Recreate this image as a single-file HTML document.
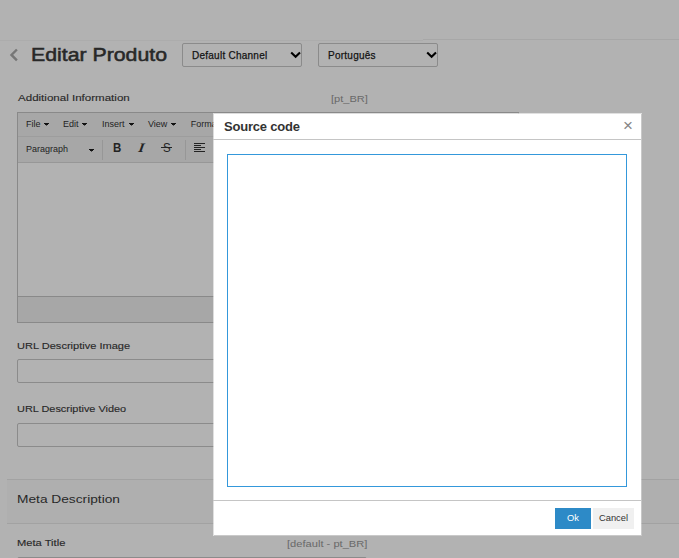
<!DOCTYPE html>
<html>
<head>
<meta charset="utf-8">
<title>Editar Produto</title>
<style>
html,body{margin:0;padding:0;}
body{width:679px;height:558px;overflow:hidden;background:#fff;position:relative;font-family:"Liberation Sans",sans-serif;color:#3a3a3a;}
.abs{position:absolute;}
.t{position:absolute;white-space:nowrap;line-height:1;}
/* page */
#navline1{left:0;top:40px;width:423px;height:1px;background:#f6f6f6;}
#navline2{left:423px;top:39px;width:256px;height:1px;background:#efefef;}
#title{left:30.6px;top:45px;font-size:19px;font-weight:normal;color:#3a3a3a;-webkit-text-stroke:0.55px #3a3a3a;transform:scaleX(1.12);transform-origin:0 0;}
.sel{position:absolute;top:43px;width:120px;height:24px;box-sizing:border-box;border:1px solid #c7c7c7;border-radius:2px;background:#fff;}
.sel span{position:absolute;left:9px;top:6.5px;font-size:10px;letter-spacing:0.25px;color:#1c1c1c;-webkit-text-stroke:0.25px #1c1c1c;white-space:nowrap;line-height:1;}
.sel svg{position:absolute;left:106.8px;top:7.2px;}
.lbl{font-size:9.9px;color:#3a3a3a;transform-origin:0 0;-webkit-text-stroke:0.13px #3a3a3a;}
.loc{font-size:9.9px;color:#979797;transform-origin:0 0;}
.inp{position:absolute;left:17px;width:350px;height:24px;box-sizing:border-box;border:1px solid #c7c7c7;border-radius:2px;background:#fff;}
/* editor */
#ed{left:17px;top:112px;width:502px;height:211px;box-sizing:border-box;border:1px solid #c5c5c5;background:#fff;}
#menubar{left:0;top:0;width:500px;height:23px;background:#f0f0f0;border-bottom:1px solid #e1e1e1;}
#toolbar{left:0;top:24px;width:500px;height:25px;background:#f0f0f0;border-bottom:1px solid #d9d9d9;}
#status{left:0;top:183px;width:500px;height:25px;background:#f0f0f0;border-top:1px solid #c5c5c5;}
.mi{font-size:9px;color:#333;top:7px;}
.caret{position:absolute;width:5px;height:3px;}
.sep{position:absolute;width:1px;height:20px;background:#d9d9d9;top:3px;}
/* accordion */
#acc{left:7px;top:479px;width:672px;height:43px;background:#fbfbfb;border-top:1px solid #e8e8e8;border-bottom:1px solid #e8e8e8;}
/* overlay */
#ov{left:0;top:0;width:679px;height:558px;background:#000;opacity:0.3;}
/* dialog */
#dlg{left:213px;top:113px;width:428px;height:422px;background:linear-gradient(#fff,#fff) 1px 1px/427px 421px no-repeat;}
.edge{position:absolute;background:#fff;}
#dhead{left:0;top:0;width:428px;height:26px;border-bottom:1px solid #c5c5c5;}
#dtitle{left:11px;top:6.6px;font-size:13px;font-weight:bold;color:#333;letter-spacing:-0.2px;}
#dclose{left:410px;top:3.5px;font-size:17px;color:#858585;}
#dta{left:14px;top:41px;width:400px;height:333px;box-sizing:border-box;border:1px solid #3498db;background:#fff;}
#dfoot{left:0;top:387px;width:428px;height:34px;border-top:1px solid #c5c5c5;}
.btn{position:absolute;top:395px;height:21px;box-sizing:border-box;font-size:9.33px;text-align:center;line-height:21px;}
#ok{left:342px;width:36px;background:#2d8ac7;color:#fff;border:1px solid #2d8ac7;line-height:19px;}
#cancel{left:380px;width:41px;background:#f0f0f0;color:#333;}
</style>
</head>
<body>
<!-- page behind -->
<div class="abs" id="navline1"></div>
<div class="abs" id="navline2"></div>
<svg class="abs" style="left:9px;top:48px" width="11" height="14" viewBox="0 0 11 14"><path d="M7.9 1.5 L2.5 6.9 L7.9 12.3" fill="none" stroke="#a9a9a9" stroke-width="2.4"/></svg>
<div class="t" id="title">Editar Produto</div>
<div class="sel" style="left:182px"><span>Default Channel</span><svg width="12" height="10" viewBox="0 0 12 10"><path d="M1.2 1.6 L5.6 5.8 L10 1.6" fill="none" stroke="#000" stroke-width="2.1"/></svg></div>
<div class="sel" style="left:318px"><span>Português</span><svg width="12" height="10" viewBox="0 0 12 10"><path d="M1.2 1.6 L5.6 5.8 L10 1.6" fill="none" stroke="#000" stroke-width="2.1"/></svg></div>

<div class="t lbl" style="left:17.5px;top:93.3px;transform:scaleX(1.17)">Additional Information</div>
<div class="t loc" style="left:331px;top:94.2px;transform:scaleX(1.12)">[pt_BR]</div>

<div class="abs" id="ed">
  <div class="abs" id="menubar">
    <div class="t mi" style="left:8px">File</div><svg class="caret" style="left:26px;top:10px" viewBox="0 0 5 3" shape-rendering="crispEdges"><path d="M0 0h5v1H0zM1 1h3v1H1z" fill="#1a1a1a"/><path d="M2 2h1v1H2z" fill="#1a1a1a" opacity=".55"/></svg>
    <div class="t mi" style="left:45px">Edit</div><svg class="caret" style="left:64px;top:10px" viewBox="0 0 5 3" shape-rendering="crispEdges"><path d="M0 0h5v1H0zM1 1h3v1H1z" fill="#1a1a1a"/><path d="M2 2h1v1H2z" fill="#1a1a1a" opacity=".55"/></svg>
    <div class="t mi" style="left:84px">Insert</div><svg class="caret" style="left:111px;top:10px" viewBox="0 0 5 3" shape-rendering="crispEdges"><path d="M0 0h5v1H0zM1 1h3v1H1z" fill="#1a1a1a"/><path d="M2 2h1v1H2z" fill="#1a1a1a" opacity=".55"/></svg>
    <div class="t mi" style="left:130px">View</div><svg class="caret" style="left:153px;top:10px" viewBox="0 0 5 3" shape-rendering="crispEdges"><path d="M0 0h5v1H0zM1 1h3v1H1z" fill="#1a1a1a"/><path d="M2 2h1v1H2z" fill="#1a1a1a" opacity=".55"/></svg>
    <div class="t mi" style="left:172.8px">Format</div>
  </div>
  <div class="abs" id="toolbar">
    <div class="t mi" style="left:8px;top:8px">Paragraph</div><svg class="caret" style="left:71px;top:12px" viewBox="0 0 5 3" shape-rendering="crispEdges"><path d="M0 0h5v1H0zM1 1h3v1H1z" fill="#1a1a1a"/><path d="M2 2h1v1H2z" fill="#1a1a1a" opacity=".55"/></svg>
    <div class="sep" style="left:84px"></div>
    <div class="t" style="left:95px;top:5px;font-size:12.5px;font-weight:bold;color:#333;transform:scaleX(0.92);transform-origin:0 0">B</div>
    <div class="t" style="left:120.5px;top:3.5px;font-size:13px;font-style:italic;font-weight:bold;color:#333;font-family:'Liberation Serif',serif;transform:skewX(-8deg) scaleX(1.15);transform-origin:50% 50%">I</div>
    <div class="t" style="left:145px;top:5px;font-size:12.5px;color:#333;transform:scaleX(0.92);transform-origin:0 0">S</div>
    <div class="abs" style="left:143px;top:10px;width:11px;height:1px;background:#333"></div>
    <div class="sep" style="left:167px"></div>
    <svg class="abs" style="left:176px;top:6px" width="12" height="10" viewBox="0 0 12 10" shape-rendering="crispEdges"><path d="M0 0h11v1H0zM0 2h7v1H0zM0 4h11v1H0zM0 6h7v1H0zM0 8h11v1H0z" fill="#333"/></svg>
  </div>
  <div class="abs" id="status"></div>
</div>

<div class="t lbl" style="left:17.3px;top:341px;transform:scaleX(1.118)">URL Descriptive Image</div>
<div class="inp" style="top:359px"></div>
<div class="t lbl" style="left:17.3px;top:404px;transform:scaleX(1.105)">URL Descriptive Video</div>
<div class="inp" style="top:423px"></div>

<div class="abs" id="acc"></div>
<div class="t" style="left:17.3px;top:494.1px;font-size:11.3px;color:#3a3a3a;transform:scaleX(1.215);transform-origin:0 0">Meta Description</div>
<div class="t lbl" style="left:17.3px;top:538.2px;transform:scaleX(1.13)">Meta Title</div>
<div class="t loc" style="left:287px;top:538.5px;transform:scaleX(1.127)">[default - pt_BR]</div>
<div class="inp" style="top:557px"></div>

<!-- overlay -->
<div class="abs" id="ov"></div>

<!-- dialog -->
<div class="abs" id="dlg">
  <div class="edge" style="left:0;top:0;width:1px;height:423px;opacity:.6"></div>
  <div class="edge" style="left:1px;top:0;width:428px;height:1px;opacity:.6"></div>
  <div class="edge" style="left:428px;top:1px;width:1px;height:422px;opacity:.3"></div>
  <div class="edge" style="left:1px;top:422px;width:427px;height:1px;opacity:.3"></div>
  <div class="abs" id="dhead"></div>
  <div class="t" id="dtitle">Source code</div>
  <div class="t" id="dclose">×</div>
  <div class="abs" id="dta"></div>
  <div class="abs" id="dfoot"></div>
  <div class="btn" id="ok">Ok</div>
  <div class="btn" id="cancel">Cancel</div>
</div>
</body>
</html>
